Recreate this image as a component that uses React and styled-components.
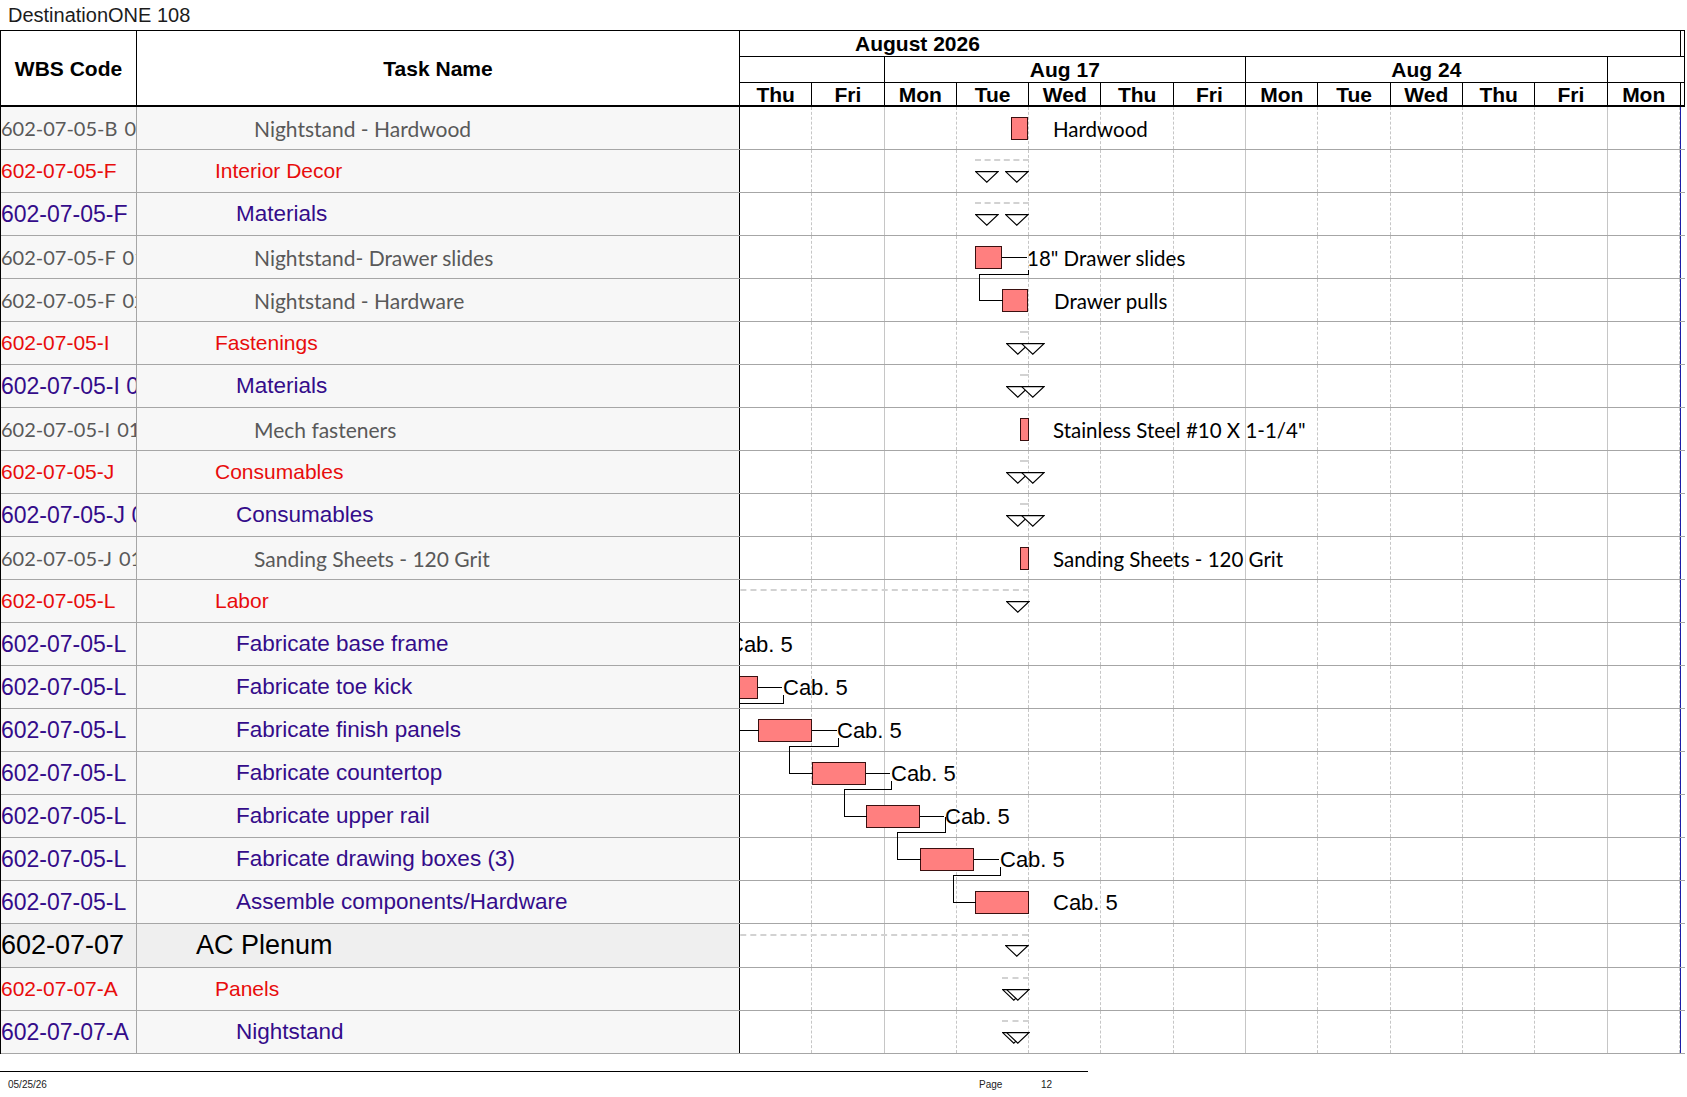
import React from 'react'
import styled, { createGlobalStyle } from 'styled-components'

const GlobalStyle = createGlobalStyle`
  html, body {
    margin: 0;
    padding: 0;
    background: #fff;
  }
  body {
    font-family: "Liberation Sans", Arial, sans-serif;
    color: #000;
  }
`

// timeline geometry, in page pixels
const LEFT = 740
const DAY = 72.3
const HEAD_BOTTOM = 107

const DAYS = ['Thu', 'Fri', 'Mon', 'Tue', 'Wed', 'Thu', 'Fri', 'Mon', 'Tue', 'Wed', 'Thu', 'Fri', 'Mon']
const WEEKS = [
  { days: 2, label: '' },
  { days: 5, label: 'Aug 17' },
  { days: 5, label: 'Aug 24' },
]

const ARIAL = '"Liberation Sans", Arial, sans-serif'
const CALIBRI = 'Lato, "Open Sans", sans-serif'

const kinds = {
  group: { color: '#e80c0c', code: '21px', name: '21px', pad: 78, family: ARIAL, gap: '0px' },
  sub: { color: '#340c8a', code: '23px', name: '22.5px', pad: 99, family: ARIAL, gap: '0px' },
  leaf: { color: '#595959', code: '20px', name: '21px', pad: 117, family: CALIBRI, gap: '2px' },
  top: { color: '#000', code: '27px', name: '27px', pad: 59, family: ARIAL, gap: '0px' },
}

const SUMMARY_SHORT = { dash: [1020, 1029], tris: [1006, 1021] }

const rows = [
  { kind: 'leaf', code: '602-07-05-B 01', name: 'Nightstand - Hardwood',
    bars: [[1011, 1028]], labels: [{ x: 1053, text: 'Hardwood', cal: true }] },
  { kind: 'group', code: '602-07-05-F', name: 'Interior Decor', dash: [975, 1029], tris: [975, 1005] },
  { kind: 'sub', code: '602-07-05-F', name: 'Materials', dash: [975, 1029], tris: [975, 1005] },
  { kind: 'leaf', code: '602-07-05-F 01', name: 'Nightstand- Drawer slides',
    bars: [[975, 1002]], leads: [[1002, 1027]], labels: [{ x: 1027, text: '18" Drawer slides', cal: true }] },
  { kind: 'leaf', code: '602-07-05-F 02', name: 'Nightstand - Hardware',
    bars: [[1002, 1028]], labels: [{ x: 1054, text: 'Drawer pulls', cal: true }] },
  { kind: 'group', code: '602-07-05-I', name: 'Fastenings', ...SUMMARY_SHORT },
  { kind: 'sub', code: '602-07-05-I 01', name: 'Materials', ...SUMMARY_SHORT },
  { kind: 'leaf', code: '602-07-05-I 01', name: 'Mech fasteners',
    bars: [[1020, 1029]], labels: [{ x: 1053, text: 'Stainless Steel #10 X 1-1/4"', cal: true }] },
  { kind: 'group', code: '602-07-05-J', name: 'Consumables', ...SUMMARY_SHORT },
  { kind: 'sub', code: '602-07-05-J 01', name: 'Consumables', ...SUMMARY_SHORT },
  { kind: 'leaf', code: '602-07-05-J 01', name: 'Sanding Sheets - 120 Grit',
    bars: [[1020, 1029]], labels: [{ x: 1053, text: 'Sanding Sheets - 120 Grit', cal: true }] },
  { kind: 'group', code: '602-07-05-L', name: 'Labor', dash: [700, 1029], tris: [1006] },
  { kind: 'sub', code: '602-07-05-L', name: 'Fabricate base frame', labels: [{ x: 728, text: 'Cab. 5' }] },
  { kind: 'sub', code: '602-07-05-L', name: 'Fabricate toe kick',
    bars: [[700, 758]], leads: [[758, 782]], labels: [{ x: 783, text: 'Cab. 5' }] },
  { kind: 'sub', code: '602-07-05-L', name: 'Fabricate finish panels',
    bars: [[758, 812]], leads: [[812, 837]], labels: [{ x: 837, text: 'Cab. 5' }] },
  { kind: 'sub', code: '602-07-05-L', name: 'Fabricate countertop',
    bars: [[812, 866]], leads: [[866, 890]], labels: [{ x: 891, text: 'Cab. 5' }] },
  { kind: 'sub', code: '602-07-05-L', name: 'Fabricate upper rail',
    bars: [[866, 920]], leads: [[920, 944]], labels: [{ x: 945, text: 'Cab. 5' }] },
  { kind: 'sub', code: '602-07-05-L', name: 'Fabricate drawing boxes (3)',
    bars: [[920, 974]], leads: [[974, 999]], labels: [{ x: 1000, text: 'Cab. 5' }] },
  { kind: 'sub', code: '602-07-05-L', name: 'Assemble components/Hardware',
    bars: [[975, 1029]], labels: [{ x: 1053, text: 'Cab. 5' }] },
  { kind: 'top', code: '602-07-07', name: 'AC Plenum', h: 44, dash: [700, 1028], dashTop: 10, tris: [1005] },
  { kind: 'group', code: '602-07-07-A', name: 'Panels', dash: [1002, 1029], tris: [1002, 1006] },
  { kind: 'sub', code: '602-07-07-A', name: 'Nightstand', dash: [1002, 1029], tris: [1002, 1006] },
]

// predecessor links, page coordinates
const links = [
  'M1027 270 V274 H978 V300.5 H1002',
  'M782 695 V703 H730 V730.5 H758',
  'M837 738 V746 H788 V773.5 H812',
  'M890 781 V789 H843 V816.5 H866',
  'M944 816.5 V832 H896 V859.5 H920',
  'M999 867 V875 H952 V902.5 H975',
]

const Page = styled.div`
  width: 1687px;
  height: 1097px;
  overflow: hidden;
`

const Title = styled.div`
  height: 30px;
  line-height: 30px;
  padding-left: 8px;
  font-size: 20px;
  color: #1c1c1c;
`

const Sheet = styled.div`
  width: 1685px;
  border-top: 1px solid #000;
  border-left: 1px solid #000;
  box-sizing: border-box;
`

const Head = styled.div`
  display: grid;
  grid-template-columns: 136px 603px 945px;
  height: 76px;
  box-sizing: border-box;
  border-bottom: 2px solid #000;
`

const HeadCell = styled.div`
  display: flex;
  align-items: center;
  justify-content: center;
  border-right: 1px solid #000;
  font-weight: bold;
  font-size: 21px;
`

const TimeHead = styled.div`
  display: flex;
  flex-direction: column;
`

const ScaleRow = styled.div`
  display: flex;
  height: ${p => p.$h}px;
  flex: ${p => (p.$h ? 'none' : 1)};
  box-sizing: border-box;
  border-bottom: ${p => (p.$h ? '1px solid #000' : 'none')};
`

const ScaleCell = styled.div`
  flex: ${p => (p.$w ? `0 0 ${p.$w}px` : 1)};
  box-sizing: border-box;
  border-right: 1px solid #000;
  display: flex;
  align-items: center;
  justify-content: ${p => (p.$start ? 'flex-start' : 'center')};
  padding-left: ${p => p.$pad || 0}px;
  font-weight: bold;
  font-size: 21px;
  white-space: nowrap;
  overflow: hidden;
`

const Body = styled.div`
  position: relative;
`

const Row = styled.div`
  display: grid;
  grid-template-columns: 136px 603px 941px;
  height: ${p => p.$h}px;
  box-sizing: border-box;
  border-bottom: 1px solid #a6a6a6;
  &:last-child {
    border-bottom-color: #000;
  }
`

const WbsCell = styled.div`
  display: flex;
  align-items: center;
  overflow: hidden;
  white-space: nowrap;
  border-right: 1px solid #a6a6a6;
  background: ${p => (p.$kind === 'top' ? '#efefef' : '#f7f7f7')};
  color: ${p => kinds[p.$kind].color};
  font-family: ${p => kinds[p.$kind].family};
  font-size: ${p => kinds[p.$kind].code};
  word-spacing: ${p => kinds[p.$kind].gap};
`

const NameCell = styled.div`
  display: flex;
  align-items: center;
  overflow: hidden;
  white-space: nowrap;
  border-right: 1px solid #000;
  padding-left: ${p => kinds[p.$kind].pad}px;
  background: ${p => (p.$kind === 'top' ? '#efefef' : '#f7f7f7')};
  color: ${p => kinds[p.$kind].color};
  font-family: ${p => kinds[p.$kind].family};
  font-size: ${p => kinds[p.$kind].name};
`

const GanttCell = styled.div`
  position: relative;
  display: flex;
  overflow: hidden;
  border-right: 1px solid #1c1ca8;
  background: #fff;
`

const DayCell = styled.div`
  flex: 0 0 ${DAY}px;
  box-sizing: border-box;
  border-right: 1px ${p => (p.$weekEnd ? 'solid' : 'dashed')} #c6c6c6;
  &:last-child {
    border-right: none;
  }
`

const Bar = styled.div`
  position: absolute;
  top: 10px;
  height: 23px;
  box-sizing: border-box;
  background: #ff7f7f;
  border: 1px solid #3a1010;
`

const Lead = styled.div`
  position: absolute;
  top: 21px;
  height: 1px;
  background: #000;
`

const Label = styled.div`
  position: absolute;
  top: 21.5px;
  transform: translateY(-50%);
  white-space: nowrap;
  line-height: 1;
  color: #000;
  font-family: ${p => (p.$cal ? CALIBRI : ARIAL)};
  font-size: ${p => (p.$cal ? '20.5px' : '22px')};
`

const Dash = styled.div`
  position: absolute;
  top: ${p => p.$top}px;
  height: 0;
  border-top: 2px dashed #d2d2d2;
`

const Tri = styled.svg`
  position: absolute;
  top: 21px;
  width: 24px;
  height: 12px;
`

const LinkLayer = styled.svg`
  position: absolute;
  left: ${LEFT - 1}px;
  top: 0;
  width: 940px;
  height: 100%;
  pointer-events: none;
`

const Footer = styled.div`
  width: 1088px;
  margin-top: 17px;
  border-top: 1px solid #000;
  box-sizing: border-box;
  display: grid;
  grid-template-columns: 971px 62px auto;
  padding: 7px 0 0 8px;
  font-size: 10px;
  line-height: 12px;
  color: #222;
`

const weekEnds = new Set([1, 6, 11])

function Chart({ row }) {
  return (
    <GanttCell>
      {DAYS.map((d, i) => <DayCell key={i} $weekEnd={weekEnds.has(i)} />)}
      {row.dash && (
        <Dash $top={row.dashTop || 9} style={{ left: row.dash[0] - LEFT, width: row.dash[1] - row.dash[0] }} />
      )}
      {(row.tris || []).map((x, i) => (
        <Tri key={'t' + i} viewBox="0 0 24 12" style={{ left: x - LEFT }}>
          <polygon points="0.6,0.6 23,0.6 11.8,11.2" fill="#fff" stroke="#000" strokeWidth="1.2" />
        </Tri>
      ))}
      {(row.leads || []).map(([a, b], i) => (
        <Lead key={'l' + i} style={{ left: a - LEFT, width: b - a }} />
      ))}
      {(row.bars || []).map(([a, b], i) => (
        <Bar key={'b' + i} style={{ left: a - LEFT, width: b - a }} />
      ))}
      {(row.labels || []).map((l, i) => (
        <Label key={'x' + i} $cal={l.cal} style={{ left: l.x - LEFT }}>{l.text}</Label>
      ))}
    </GanttCell>
  )
}

export default function App() {
  return (
    <Page>
      <GlobalStyle />
      <Title>DestinationONE 108</Title>
      <Sheet>
        <Head>
          <HeadCell>WBS Code</HeadCell>
          <HeadCell>Task Name</HeadCell>
          <TimeHead>
            <ScaleRow $h={26}>
              <ScaleCell $w={DAY * 13 + 1} $start $pad={115}>August 2026</ScaleCell>
              <ScaleCell />
            </ScaleRow>
            <ScaleRow $h={26}>
              {WEEKS.map((w, i) => (
                <ScaleCell key={i} $w={w.days * DAY}>{w.label}</ScaleCell>
              ))}
              <ScaleCell />
            </ScaleRow>
            <ScaleRow>
              {DAYS.map((d, i) => (
                <ScaleCell key={i} $w={DAY + (i === 12 ? 1 : 0)}>{d}</ScaleCell>
              ))}
              <ScaleCell />
            </ScaleRow>
          </TimeHead>
        </Head>
        <Body>
          {rows.map((r, i) => (
            <Row key={i} $h={r.h || 43}>
              <WbsCell $kind={r.kind}>{r.code}</WbsCell>
              <NameCell $kind={r.kind}>{r.name}</NameCell>
              <Chart row={r} />
            </Row>
          ))}
          <LinkLayer>
            <g transform={`translate(${-LEFT + 1} ${-HEAD_BOTTOM})`} fill="none" stroke="#000" strokeWidth="1" shapeRendering="crispEdges">
              {links.map((d, i) => <path key={i} d={d} />)}
            </g>
          </LinkLayer>
        </Body>
      </Sheet>
      <Footer>
        <span>05/25/26</span>
        <span>Page</span>
        <span>12</span>
      </Footer>
    </Page>
  )
}
